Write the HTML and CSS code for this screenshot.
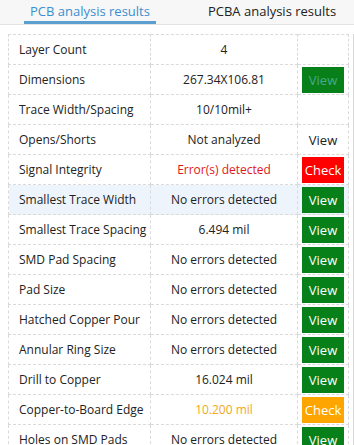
FILE: index.html
```html
<!DOCTYPE html>
<html>
<head>
<meta charset="utf-8">
<link rel="stylesheet" href="styles.css">
</head>
<body>
<div class="tabs">
  <div class="tab active">PCB analysis results</div>
  <div class="tab">PCBA analysis results</div>
</div>
<div class="content">
  <table class="results">
    <tr><td class="name">Layer Count</td><td class="val">4</td><td class="act"></td></tr>
    <tr><td class="name">Dimensions</td><td class="val">267.34X106.81</td><td class="act"><span class="btn green faded">View</span></td></tr>
    <tr><td class="name">Trace Width/Spacing</td><td class="val">10/10mil+</td><td class="act"></td></tr>
    <tr><td class="name">Opens/Shorts</td><td class="val">Not analyzed</td><td class="act"><span class="btn plain">View</span></td></tr>
    <tr><td class="name">Signal Integrity</td><td class="val err">Error(s) detected</td><td class="act"><span class="btn red">Check</span></td></tr>
    <tr class="hl"><td class="name">Smallest Trace Width</td><td class="val">No errors detected</td><td class="act"><span class="btn green">View</span></td></tr>
    <tr><td class="name">Smallest Trace Spacing</td><td class="val">6.494 mil</td><td class="act"><span class="btn green">View</span></td></tr>
    <tr><td class="name">SMD Pad Spacing</td><td class="val">No errors detected</td><td class="act"><span class="btn green">View</span></td></tr>
    <tr><td class="name">Pad Size</td><td class="val">No errors detected</td><td class="act"><span class="btn green">View</span></td></tr>
    <tr><td class="name">Hatched Copper Pour</td><td class="val">No errors detected</td><td class="act"><span class="btn green">View</span></td></tr>
    <tr><td class="name">Annular Ring Size</td><td class="val">No errors detected</td><td class="act"><span class="btn green">View</span></td></tr>
    <tr><td class="name">Drill to Copper</td><td class="val">16.024 mil</td><td class="act"><span class="btn green">View</span></td></tr>
    <tr><td class="name">Copper-to-Board Edge</td><td class="val warn">10.200 mil</td><td class="act"><span class="btn orange">Check</span></td></tr>
    <tr><td class="name">Holes on SMD Pads</td><td class="val">No errors detected</td><td class="act"><span class="btn green">View</span></td></tr>
  </table>
  <div class="scrollbar"></div>
</div>
</body>
</html>
```
FILE: styles.css
```css
html, body {
  margin: 0;
  padding: 0;
  height: 100%;
  overflow: hidden;
  background: #ffffff;
  font-family: "Open Sans", "Noto Sans", sans-serif;
  color: #222;
}
.tabs {
  display: flex;
  height: 25px;
  background: #f7f7f7;
  border-bottom: 1px solid #e3e3e3;
  box-sizing: border-box;
  padding-left: 24px;
}
.tab {
  font-size: 13px;
  line-height: 22px;
  height: 22px;
  padding: 0 6px;
  color: #222;
}
.tab.active {
  color: #3a8fd0;
  border-bottom: 3px solid #5a9fd0;
  height: 21px;
  margin-right: 46px;
}
.content {
  display: flex;
  padding: 9px 0 0 8px;
  gap: 4px;
}
.results {
  border-collapse: collapse;
  table-layout: fixed;
  width: 338px;
  border: 1px dashed #dadada;
  font-size: 12px;
}
.results td {
  border: 1px dashed #dadada;
  height: 29px;
  padding: 0;
  white-space: nowrap;
}
.results tr.hl td {
  background: #eef4fc;
}
.name {
  width: 131px;
  padding-left: 10px !important;
}
.val {
  width: 146px;
  text-align: center;
}
.val.err { color: #e01818; }
.val.warn { color: #f0a81c; }
.act {
  width: 50px;
  text-align: center;
}
.btn {
  display: inline-block;
  width: 42px;
  height: 26px;
  line-height: 26px;
  font-size: 13px;
  color: #ffffff;
  vertical-align: middle;
}
.btn.green { background: #08801a; }
.btn.green.faded { color: #4aa88c; }
.btn.red { background: #ff0000; }
.btn.orange { background: #ffa500; }
.btn.plain { color: #222; }
.scrollbar {
  width: 4px;
  background: #d6d6d6;
  height: 420px;
}
```
